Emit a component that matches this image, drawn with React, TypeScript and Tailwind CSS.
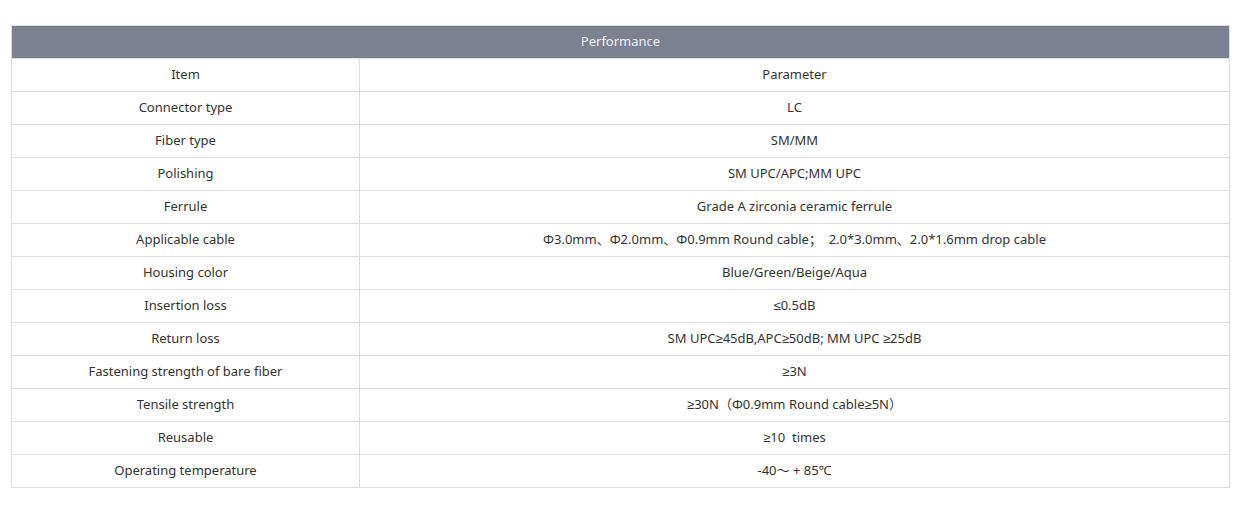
import React from "react";

const rows: [string, string][] = [
  ["Item", "Parameter"],
  ["Connector type", "LC"],
  ["Fiber type", "SM/MM"],
  ["Polishing", "SM UPC/APC;MM UPC"],
  ["Ferrule", "Grade A zirconia ceramic ferrule"],
  ["Applicable cable", "Φ3.0mm、Φ2.0mm、Φ0.9mm Round cable；  2.0*3.0mm、2.0*1.6mm drop cable"],
  ["Housing color", "Blue/Green/Beige/Aqua"],
  ["Insertion loss", "≤0.5dB"],
  ["Return loss", "SM UPC≥45dB,APC≥50dB; MM UPC ≥25dB"],
  ["Fastening strength of bare fiber", "≥3N"],
  ["Tensile strength", "≥30N（Φ0.9mm Round cable≥5N）"],
  ["Reusable", "≥10  times"],
  ["Operating temperature", "-40～ + 85℃"],
];

export default function App() {
  return (
    <div
      className="w-[1240px] h-[513px] bg-white pt-[25px] pl-[11px] text-[13px] text-[#333]"
      style={{ fontFamily: '"Noto Sans", "Liberation Sans", "Noto Sans CJK SC", sans-serif' }}
    >
      <div className="w-[1219px] border-l border-t border-[#dcdcdc]">
        <div className="h-[33px] border-r border-b border-[#dcdcdc] bg-[#7b8191] text-[#f2f2f2] flex items-center justify-center">
          Performance
        </div>
        {rows.map(([a, b], i) => (
          <div key={i} className="grid grid-cols-[348px_870px]">
            <div className="h-[33px] border-r border-b border-[#dcdcdc] flex items-center justify-center whitespace-pre">
              {a}
            </div>
            <div className="h-[33px] border-r border-b border-[#dcdcdc] flex items-center justify-center whitespace-pre">
              {b}
            </div>
          </div>
        ))}
      </div>
    </div>
  );
}
